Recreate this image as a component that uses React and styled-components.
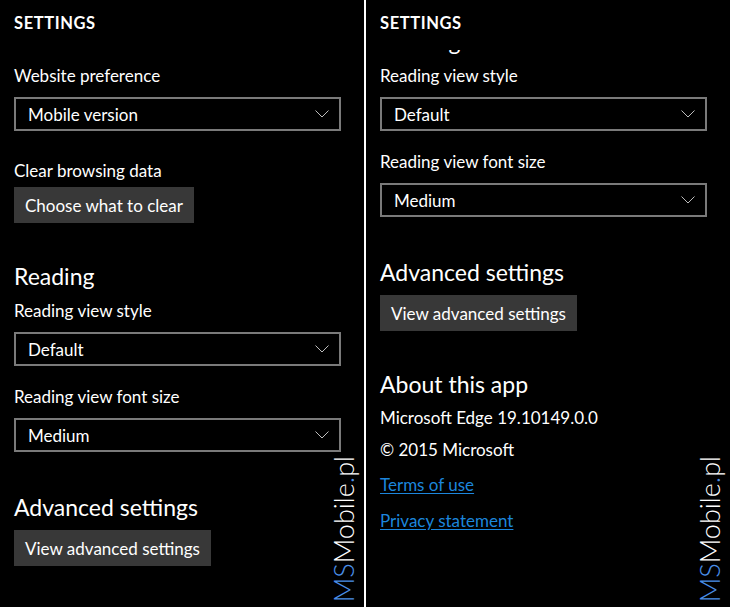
import styled, { createGlobalStyle } from "styled-components";

const GlobalStyle = createGlobalStyle`
  html, body {
    margin: 0;
    padding: 0;
    background: #000;
  }
  body {
    font-family: "Segoe UI", Lato, "Noto Sans", sans-serif;
    color: #fff;
  }
`;

const Screen = styled.div`
  display: flex;
  width: 730px;
  height: 607px;
  background: #fff;
  gap: 2px;
`;

const Panel = styled.div`
  position: relative;
  flex: 0 0 364px;
  height: 607px;
  background: #000;
  display: flex;
  flex-direction: column;
  overflow: hidden;
`;

const Header = styled.div`
  height: 50px;
  flex: 0 0 50px;
  box-sizing: border-box;
  padding: 12px 14px 0;
  font-size: 16.5px;
  line-height: 22px;
  font-weight: 700;
  letter-spacing: 0.6px;
`;

const Viewport = styled.div`
  flex: 1;
  overflow: hidden;
`;

const Content = styled.div`
  display: flex;
  flex-direction: column;
  padding: 0 23px 0 14px;
  margin-top: ${(p) => -p.$scroll}px;
`;

const Label = styled.div`
  font-size: 17px;
  line-height: 22px;
  margin-top: ${(p) => p.$gap}px;
`;

const Heading = styled.div`
  font-size: 23px;
  line-height: 30px;
  margin-top: ${(p) => p.$gap}px;
`;

const Dropdown = styled.div`
  margin-top: 10px;
  height: 34px;
  box-sizing: border-box;
  border: 2px solid #7a7a7a;
  display: flex;
  align-items: center;
  justify-content: space-between;
  padding: 0 10px 0 12px;
  font-size: 17px;

  svg {
    width: 14px;
    height: 8px;
  }
`;

const Button = styled.div`
  align-self: flex-start;
  margin-top: ${(p) => p.$gap}px;
  height: 36px;
  box-sizing: border-box;
  padding: 0 11px;
  background: #383838;
  display: flex;
  align-items: center;
  font-size: 17px;
`;

const Link = styled.a`
  margin-top: ${(p) => p.$gap}px;
  align-self: flex-start;
  font-size: 17px;
  line-height: 22px;
  color: #1c86dc;
  text-decoration: underline;
  text-underline-offset: 2px;
`;

const Watermark = styled.div`
  position: absolute;
  right: 9px;
  bottom: 5px;
  writing-mode: vertical-rl;
  transform: rotate(180deg);
  font-family: Lato, "Noto Sans", sans-serif;
  font-weight: 300;
  font-size: 27px;
  line-height: 22px;
  color: #fff;

  span {
    color: #4a8fe8;
  }
`;

const Chevron = () => (
  <svg viewBox="0 0 14 8" fill="none">
    <path d="M0.5 0.5 L7 7 L13.5 0.5" stroke="#bdbdbd" strokeWidth="1" />
  </svg>
);

const Select = ({ value }) => (
  <Dropdown>
    <span>{value}</span>
    <Chevron />
  </Dropdown>
);

const SettingsList = ({ scroll = 0 }) => (
  <Content $scroll={scroll}>
    <Label $gap={15}>Website preference</Label>
    <Select value="Mobile version" />

    <Label $gap={29}>Clear browsing data</Label>
    <Button $gap={5}>Choose what to clear</Button>

    <Heading $gap={38}>Reading</Heading>
    <Label $gap={9}>Reading view style</Label>
    <Select value="Default" />
    <Label $gap={20}>Reading view font size</Label>
    <Select value="Medium" />

    <Heading $gap={40}>Advanced settings</Heading>
    <Button $gap={8}>View advanced settings</Button>

    <Heading $gap={38}>About this app</Heading>
    <Label $gap={8}>Microsoft Edge 19.10149.0.0</Label>
    <Label $gap={10}>© 2015 Microsoft</Label>
    <Link $gap={13}>Terms of use</Link>
    <Link $gap={14}>Privacy statement</Link>
  </Content>
);

const Mark = () => (
  <Watermark>
    <span>MS</span>Mobile<span>.</span>pl
  </Watermark>
);

export default function App() {
  return (
    <>
      <GlobalStyle />
      <Screen>
        <Panel>
          <Header>SETTINGS</Header>
          <Viewport>
            <SettingsList />
          </Viewport>
          <Mark />
        </Panel>
        <Panel>
          <Header>SETTINGS</Header>
          <Viewport>
            <SettingsList scroll={235} />
          </Viewport>
          <Mark />
        </Panel>
      </Screen>
    </>
  );
}
